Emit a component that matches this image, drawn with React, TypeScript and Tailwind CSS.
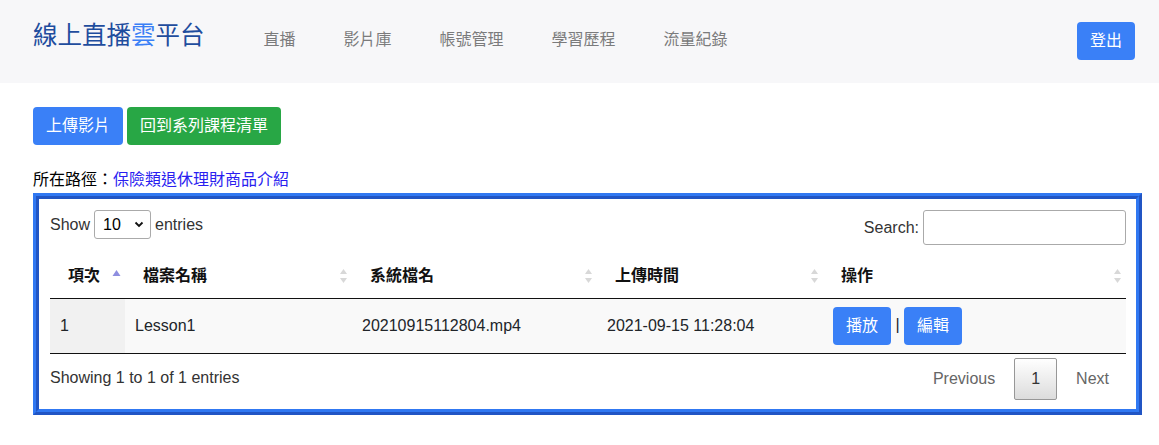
import React from "react";

const SortBoth = () => (
  <svg width="9" height="16" viewBox="0 0 9 16" className="shrink-0">
    <polygon points="4.5,1 8,6 1,6" fill="#d8d8d8" />
    <polygon points="4.5,15 8,10 1,10" fill="#d8d8d8" />
  </svg>
);

const SortAsc = () => (
  <svg width="9" height="16" viewBox="0 0 9 16" className="shrink-0">
    <polygon points="4.5,2 8.5,8 0.5,8" fill="#8e8ee0" />
  </svg>
);

const Th = ({ children, asc }: { children: React.ReactNode; asc?: boolean }) => (
  <th className="text-left font-bold py-[10px] pl-[18px] pr-[4px] border-b border-[#111] leading-6 text-[#111]">
    <div className="flex items-center justify-between">
      <span>{children}</span>
      {asc ? <SortAsc /> : <SortBoth />}
    </div>
  </th>
);

export default function App() {
  return (
    <div className="font-['Liberation_Sans','Noto_Sans_CJK_TC',sans-serif] text-[16px] text-[#212529] bg-white min-h-[445px]">
      <nav className="h-[83px] bg-[#f7f7f9] flex items-start pl-[33px] pr-[24px]">
        <div className="mt-[18px] text-[24.5px] leading-9 text-[#1f4d9e] mr-[35px]">
          線上直播<span className="text-[#3a7ff6]">雲</span>平台
        </div>
        <ul className="flex mt-[28px] leading-6 text-[#7b7b7c]">
          <li className="px-6">直播</li>
          <li className="px-6">影片庫</li>
          <li className="px-6">帳號管理</li>
          <li className="px-6">學習歷程</li>
          <li className="px-6">流量紀錄</li>
        </ul>
        <button className="ml-auto mt-[22px] h-[38px] px-[13px] rounded-[4px] bg-[#3a80f7] text-white leading-6">
          登出
        </button>
      </nav>

      <main className="pl-[33px] pr-[17px]">
        <div className="flex gap-[4px] mt-[24px]">
          <button className="h-[38px] px-[13px] rounded-[4px] bg-[#3a80f7] text-white leading-6">上傳影片</button>
          <button className="h-[38px] px-[13px] rounded-[4px] bg-[#28a745] text-white leading-6">回到系列課程清單</button>
        </div>

        <div className="mt-[23px] leading-6 text-black">
          所在路徑：<a className="text-[#2a1ef0]">保險類退休理財商品介紹</a>
        </div>

        <div className="mt-[1px] border-[3px] border-t-[#3078f2] border-l-[#3078f2] border-r-[#2155c4] border-b-[#2155c4]">
          <div className="border-[3px] border-t-[#2155c4] border-l-[#2155c4] border-r-[#3078f2] border-b-[#3078f2] bg-white pl-[11px] pr-[10px] pt-[11px] pb-[9px] text-[#333]">
            <div className="flex justify-between items-start">
              <div className="flex items-center h-[29px]">
                <span>Show</span>
                <div className="ml-[4px] mr-[4px] w-[57px] h-[29px] border border-[#aaa] rounded-[3px] flex items-center justify-between pl-[8px] pr-[6px] text-black">
                  <span>10</span>
                  <svg width="10" height="7" viewBox="0 0 10 7">
                    <polyline points="1.5,1.5 5,5 8.5,1.5" fill="none" stroke="#111" strokeWidth="1.8" />
                  </svg>
                </div>
                <span>entries</span>
              </div>
              <div className="flex items-center h-[35px]">
                <span>Search:</span>
                <div className="ml-[4px] w-[203px] h-[35px] border border-[#aaa] rounded-[3px] bg-white" />
              </div>
            </div>

            <table className="mt-[9px] w-full table-fixed border-collapse">
              <colgroup>
                <col className="w-[75px]" />
                <col className="w-[227px]" />
                <col className="w-[245px]" />
                <col className="w-[226px]" />
                <col />
              </colgroup>
              <thead>
                <tr>
                  <Th asc>項次</Th>
                  <Th>檔案名稱</Th>
                  <Th>系統檔名</Th>
                  <Th>上傳時間</Th>
                  <Th>操作</Th>
                </tr>
              </thead>
              <tbody>
                <tr className="bg-[#f9f9f9] text-[#212529] border-b border-[#111]">
                  <td className="px-[10px] py-[8px] bg-[#f1f1f1] leading-6">1</td>
                  <td className="px-[10px] py-[8px] leading-6">Lesson1</td>
                  <td className="px-[10px] py-[8px] leading-6">20210915112804.mp4</td>
                  <td className="px-[10px] py-[8px] leading-6">2021-09-15 11:28:04</td>
                  <td className="px-[10px] py-[8px] leading-6 whitespace-nowrap">
                    <button className="h-[38px] px-[13px] rounded-[4px] bg-[#3a80f7] text-white leading-6 align-middle">播放</button>
                    {" | "}
                    <button className="h-[38px] px-[13px] rounded-[4px] bg-[#3a80f7] text-white leading-6 align-middle">編輯</button>
                  </td>
                </tr>
              </tbody>
            </table>

            <div className="flex justify-between items-start">
              <div className="pt-[12px] leading-6">Showing 1 to 1 of 1 entries</div>
              <div className="pt-[4px] flex items-center leading-6">
                <span className="px-[16px] py-[8px] border border-transparent text-[#666]">Previous</span>
                <span className="ml-[2px] px-[16px] py-[8px] border border-[#979797] rounded-[2px] bg-gradient-to-b from-white to-[#dcdcdc] text-[#333]">1</span>
                <span className="ml-[2px] px-[16px] py-[8px] border border-transparent text-[#666]">Next</span>
              </div>
            </div>
          </div>
        </div>
      </main>
    </div>
  );
}
